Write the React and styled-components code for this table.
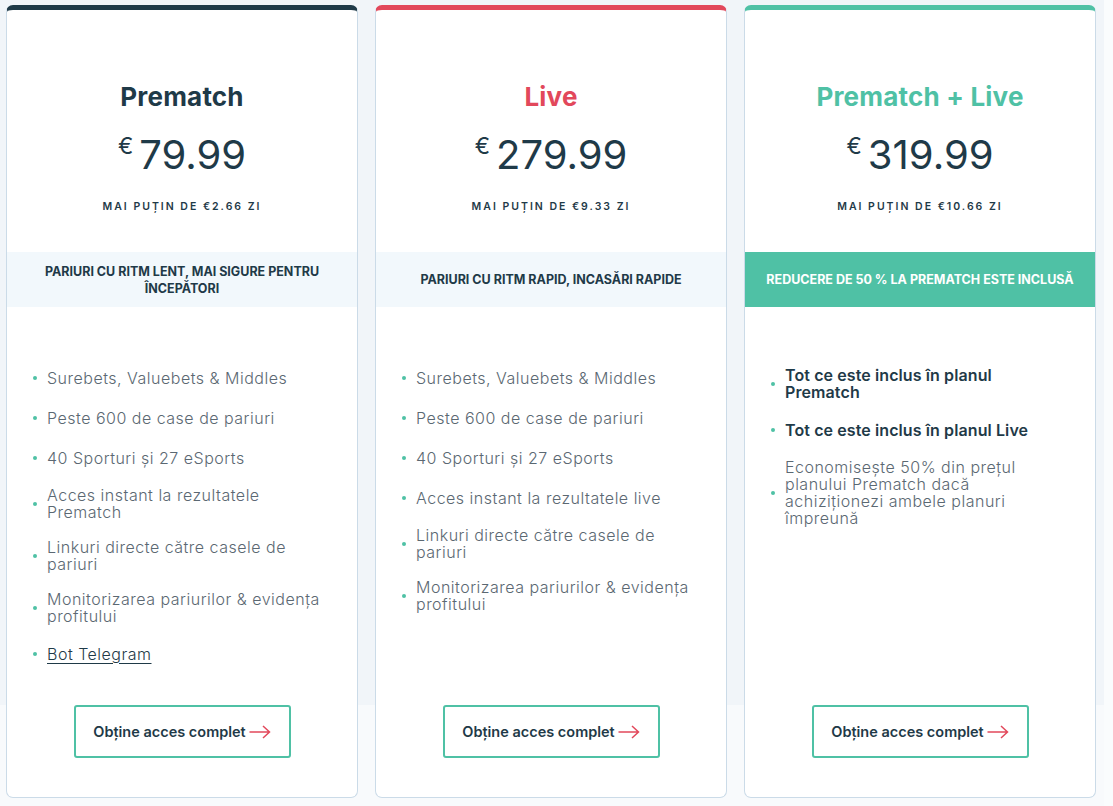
import React from 'react';
import styled, {createGlobalStyle} from 'styled-components';

const GlobalStyle = createGlobalStyle`
  html, body {
    margin: 0;
    padding: 0;
    background: #fafcfd;
  }
  body {
    font-family: Inter, "Open Sans", sans-serif;
  }
`;

const colors = {
    dark: '#1f3a48',
    red: '#e2485b',
    green: '#4fc1a5',
    text: '#5b6872',
    band: '#f2f8fc',
    border: '#cbdbe8',
};

const Section = styled.div`
  width: 1104px;
  min-height: 806px;
  box-sizing: border-box;
  padding: 5px 0 0 6px;
  background: linear-gradient(#f1f5f9 0, #f1f5f9 705px, #f8fafc 705px);
  display: flex;
  gap: 17px;
  align-items: flex-start;
`;

const Card = styled.div`
  width: 352px;
  height: 793px;
  box-sizing: border-box;
  background: #fff;
  border: 1px solid ${colors.border};
  border-top: 5px solid ${p => p.accent};
  border-radius: 7px;
  display: flex;
  flex-direction: column;
  overflow: hidden;
`;

const Header = styled.div`
  display: flex;
  flex-direction: column;
  align-items: center;
  padding-top: 70px;
`;

const Title = styled.h2`
  margin: 0;
  font-size: 26px;
  line-height: 34px;
  font-weight: 700;
  color: ${p => p.color};
  letter-spacing: 0.2px;
`;

const Price = styled.div`
  margin-top: 17px;
  display: flex;
  align-items: flex-start;
  color: ${colors.dark};
  font-size: 40px;
  line-height: 48px;
  font-weight: 400;
`;

const Currency = styled.span`
  font-size: 23px;
  line-height: 26px;
  margin-right: 6px;
  margin-top: 2px;
`;

const Daily = styled.div`
  margin-top: 20px;
  font-size: 10.5px;
  line-height: 16px;
  font-weight: 600;
  letter-spacing: 2px;
  color: ${colors.dark};
`;

const Band = styled.div`
  margin-top: 37px;
  height: 55px;
  box-sizing: border-box;
  padding: 0 12px;
  display: flex;
  align-items: center;
  justify-content: center;
  text-align: center;
  background: ${p => (p.highlight ? colors.green : colors.band)};
  color: ${p => (p.highlight ? '#fff' : colors.dark)};
  font-size: 12.5px;
  line-height: 17px;
  font-weight: 700;
`;

const BandText = styled.span`
  max-width: ${p => (p.highlight ? 'none' : '290px')};
`;

const List = styled.ul`
  list-style: none;
  margin: 0;
  padding: 51px 25px 0 26px;
`;

const Item = styled.li`
  display: flex;
  align-items: center;
  min-height: 22px;
  padding: 9px 0;
  font-size: 16px;
  line-height: 17px;
  font-weight: ${p => (p.strong ? 600 : 300)};
  color: ${p => (p.strong ? colors.dark : colors.text)};
  letter-spacing: ${p => (p.strong ? '0.1px' : '0.5px')};

  &::before {
    content: '';
    flex: 0 0 4px;
    height: 4px;
    border-radius: 50%;
    background: ${colors.green};
    margin-right: 10px;
  }
`;

const Link = styled.a`
  color: ${colors.dark};
  text-decoration: underline;
  text-underline-offset: 3px;
  text-decoration-thickness: 1px;
`;

const Footer = styled.div`
  margin-top: auto;
  padding-bottom: 39px;
  display: flex;
  justify-content: center;
`;

const Button = styled.button`
  width: 217px;
  height: 53px;
  border: 2px solid ${colors.green};
  border-radius: 3px;
  background: #fff;
  color: ${colors.dark};
  font-family: inherit;
  font-size: 14.5px;
  font-weight: 600;
  display: flex;
  align-items: center;
  justify-content: center;
  gap: 3px;
  cursor: pointer;
`;

const Arrow = () => (
    <svg width="22" height="14" viewBox="0 0 22 14" fill="none">
        <path d="M0.5 7H20.5M14 1L20.5 7L14 13" stroke={colors.red} strokeWidth="1.5"/>
    </svg>
);

const plans = [
    {
        title: 'Prematch',
        accent: colors.dark,
        price: '79.99',
        daily: 'MAI PUȚIN DE €2.66 ZI',
        band: 'PARIURI CU RITM LENT, MAI SIGURE PENTRU ÎNCEPĂTORI',
        items: [
            {text: 'Surebets, Valuebets & Middles'},
            {text: 'Peste 600 de case de pariuri'},
            {text: '40 Sporturi și 27 eSports'},
            {text: 'Acces instant la rezultatele Prematch'},
            {text: 'Linkuri directe către casele de pariuri'},
            {text: 'Monitorizarea pariurilor & evidența profitului'},
            {text: 'Bot Telegram', link: true},
        ],
    },
    {
        title: 'Live',
        accent: colors.red,
        price: '279.99',
        daily: 'MAI PUȚIN DE €9.33 ZI',
        band: 'PARIURI CU RITM RAPID, INCASĂRI RAPIDE',
        items: [
            {text: 'Surebets, Valuebets & Middles'},
            {text: 'Peste 600 de case de pariuri'},
            {text: '40 Sporturi și 27 eSports'},
            {text: 'Acces instant la rezultatele live'},
            {text: 'Linkuri directe către casele de pariuri'},
            {text: 'Monitorizarea pariurilor & evidența profitului'},
        ],
    },
    {
        title: 'Prematch + Live',
        accent: colors.green,
        price: '319.99',
        daily: 'MAI PUȚIN DE €10.66 ZI',
        band: 'REDUCERE DE 50 % LA PREMATCH ESTE INCLUSĂ',
        highlight: true,
        items: [
            {text: 'Tot ce este inclus în planul Prematch', strong: true},
            {text: 'Tot ce este inclus în planul Live', strong: true},
            {text: 'Economisește 50% din prețul planului Prematch dacă achiziționezi ambele planuri împreună'},
        ],
    },
];

const App = () => {
    return (
        <>
            <GlobalStyle/>
            <Section>
                {plans.map(plan => (
                    <Card key={plan.title} accent={plan.accent}>
                        <Header>
                            <Title color={plan.accent}>{plan.title}</Title>
                            <Price>
                                <Currency>€</Currency>
                                {plan.price}
                            </Price>
                            <Daily>{plan.daily}</Daily>
                        </Header>
                        <Band highlight={plan.highlight}>
                            <BandText highlight={plan.highlight}>{plan.band}</BandText>
                        </Band>
                        <List>
                            {plan.items.map(item => (
                                <Item key={item.text} strong={item.strong}>
                                    {item.link ? <Link href="#">{item.text}</Link> : <span>{item.text}</span>}
                                </Item>
                            ))}
                        </List>
                        <Footer>
                            <Button>
                                Obține acces complet
                                <Arrow/>
                            </Button>
                        </Footer>
                    </Card>
                ))}
            </Section>
        </>
    );
};

export default App;
